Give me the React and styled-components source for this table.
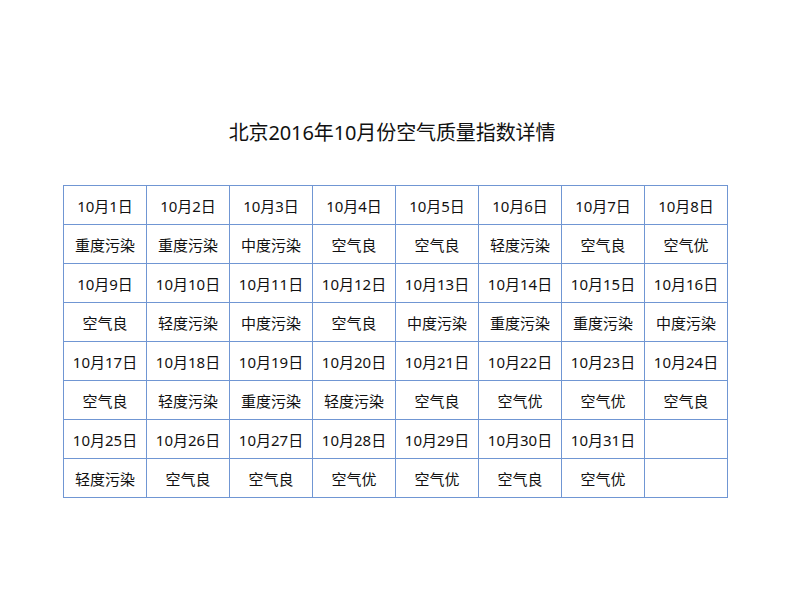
import styled, { createGlobalStyle } from "styled-components";

const GlobalStyle = createGlobalStyle`
  html, body {
    margin: 0;
    padding: 0;
    background: #ffffff;
  }
  body {
    font-family: "Noto Sans", "Noto Sans CJK SC", sans-serif;
    color: #111111;
  }
`;

const Page = styled.div`
  width: 794px;
  height: 596px;
  display: flex;
  flex-direction: column;
  align-items: center;
  box-sizing: border-box;
  padding-top: 119px;
`;

const Title = styled.h1`
  margin: 0 10px 0 0;
  font-size: 20px;
  line-height: 28px;
  font-weight: 400;
  color: #111111;
  letter-spacing: -0.1px;
`;

const Table = styled.table`
  margin-top: 38px;
  margin-right: 3px;
  border-collapse: collapse;
  table-layout: fixed;
  width: 665px;
`;

const Cell = styled.td`
  border: 1px solid #7096d3;
  height: 38px;
  padding: 0;
  text-align: center;
  vertical-align: middle;
  font-size: 15px;
  color: #111111;
  white-space: nowrap;
`;

const levels = [
  "重度污染", "重度污染", "中度污染", "空气良", "空气良", "轻度污染", "空气良", "空气优",
  "空气良", "轻度污染", "中度污染", "空气良", "中度污染", "重度污染", "重度污染", "中度污染",
  "空气良", "轻度污染", "重度污染", "轻度污染", "空气良", "空气优", "空气优", "空气良",
  "轻度污染", "空气良", "空气良", "空气优", "空气优", "空气良", "空气优",
];

const weeks = [0, 1, 2, 3].map((w) =>
  Array.from({ length: 8 }, (_, i) => w * 8 + i).map((d) =>
    d < 31 ? { date: `10月${d + 1}日`, level: levels[d] } : { date: "", level: "" }
  )
);

export default function App() {
  return (
    <>
      <GlobalStyle />
      <Page>
        <Title>北京2016年10月份空气质量指数详情</Title>
        <Table>
          <tbody>
            {weeks.map((week, w) => [
              <tr key={`d${w}`}>
                {week.map((c, i) => (
                  <Cell key={i}>{c.date}</Cell>
                ))}
              </tr>,
              <tr key={`l${w}`}>
                {week.map((c, i) => (
                  <Cell key={i}>{c.level}</Cell>
                ))}
              </tr>,
            ])}
          </tbody>
        </Table>
      </Page>
    </>
  );
}
